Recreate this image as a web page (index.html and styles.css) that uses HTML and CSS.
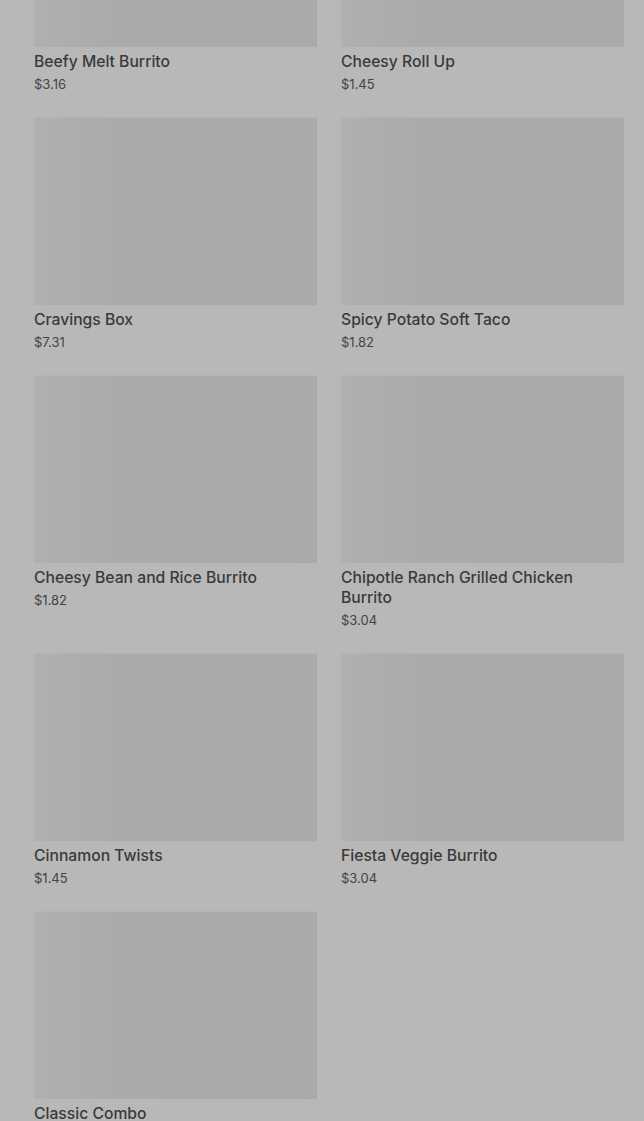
FILE: index.html
```html
<!DOCTYPE html>
<html>
<head>
<meta charset="utf-8">
<link rel="stylesheet" href="styles.css">
</head>
<body>
<main class="menu">
  <div class="grid">
    <div class="card"><div class="thumb"></div><div class="name">Beefy Melt Burrito</div><div class="price">$3.16</div></div>
    <div class="card"><div class="thumb"></div><div class="name">Cheesy Roll Up</div><div class="price">$1.45</div></div>
    <div class="card"><div class="thumb"></div><div class="name">Cravings Box</div><div class="price">$7.31</div></div>
    <div class="card"><div class="thumb"></div><div class="name">Spicy Potato Soft Taco</div><div class="price">$1.82</div></div>
    <div class="card"><div class="thumb"></div><div class="name">Cheesy Bean and Rice Burrito</div><div class="price">$1.82</div></div>
    <div class="card"><div class="thumb"></div><div class="name">Chipotle Ranch Grilled Chicken Burrito</div><div class="price">$3.04</div></div>
    <div class="card"><div class="thumb"></div><div class="name">Cinnamon Twists</div><div class="price">$1.45</div></div>
    <div class="card"><div class="thumb"></div><div class="name">Fiesta Veggie Burrito</div><div class="price">$3.04</div></div>
    <div class="card"><div class="thumb"></div><div class="name">Classic Combo</div><div class="price">$5.49</div></div>
  </div>
</main>
</body>
</html>
```
FILE: styles.css
```css
html, body {
  margin: 0;
  padding: 0;
  background: #b8b8b8;
  overflow: hidden;
}
body {
  font-family: Inter, "Noto Sans", sans-serif;
  color: #3a3a3a;
}
.menu {
  padding: 0 20px 0 34px;
}
.grid {
  display: grid;
  grid-template-columns: 283px 283px;
  column-gap: 24px;
  row-gap: 23px;
  margin-top: -141px;
}
.thumb {
  height: 188px;
  background: linear-gradient(90deg, #b0b0b0 0%, #ababab 25%, #aaaaaa 100%);
  box-shadow: inset 0 1px 0 #b3b3b3;
}
.name {
  margin-top: 5px;
  font-size: 15.7px;
  line-height: 20px;
  font-weight: 500;
  color: #3a3a3a;
}
.price {
  margin-top: 2px;
  font-size: 13px;
  line-height: 20px;
  color: #444444;
}
```
